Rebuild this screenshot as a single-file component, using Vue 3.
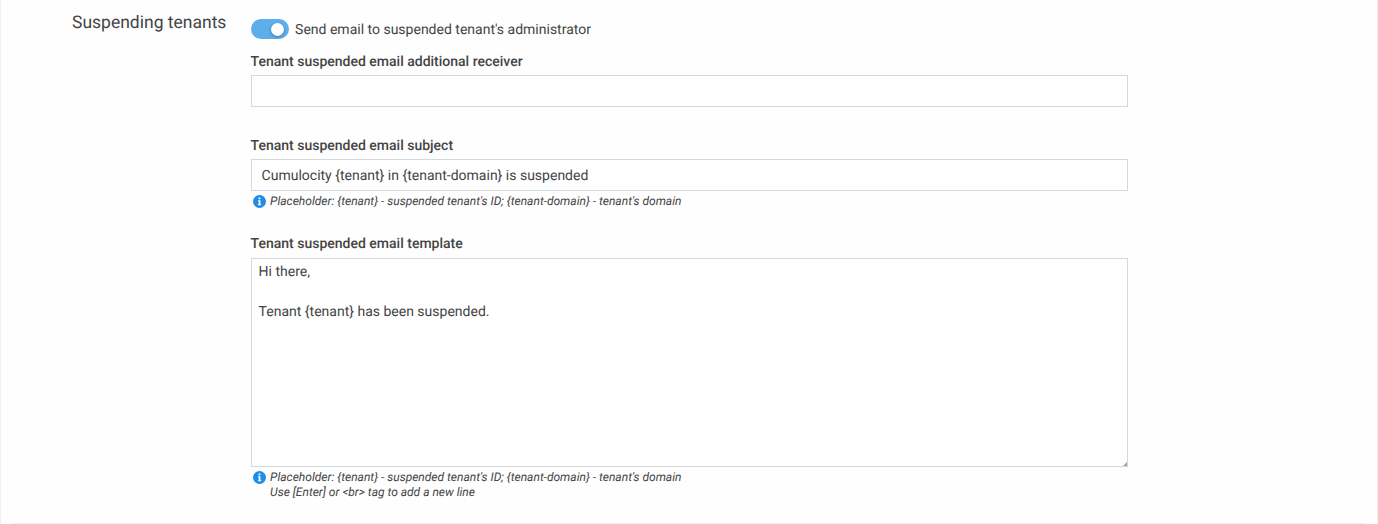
<script setup>
import { ref } from 'vue'

const notify = ref(true)
const receiver = ref('')
const subject = ref('Cumulocity {tenant} in {tenant-domain} is suspended')
const template = ref('Hi there,\n\nTenant {tenant} has been suspended.')
const placeholderHint = "Placeholder: {tenant} - suspended tenant's ID; {tenant-domain} - tenant's domain"
</script>

<template>
  <main class="panel">
    <section class="settings">
      <h2 class="title"><span>Suspending tenants</span></h2>
      <form class="fields" @submit.prevent>
        <label class="switch">
          <input v-model="notify" type="checkbox" class="switch-input" />
          <span class="track"><span class="thumb"></span></span>
          <span class="switch-text">Send email to suspended tenant's administrator</span>
        </label>

        <label class="label first" for="receiver"><span>Tenant suspended email additional receiver</span></label>
        <input id="receiver" v-model="receiver" class="control" type="text" />

        <label class="label second" for="subject"><span>Tenant suspended email subject</span></label>
        <input id="subject" v-model="subject" class="control subject" type="text" />
        <div class="hint">
          <svg class="info" viewBox="0 0 13 13" aria-hidden="true">
            <circle cx="6.5" cy="6.5" r="6.5" />
            <path d="M5.6 2.5h1.8v1.7H5.6zM5 5.2h2.4v4h.8v1H4.9v-1h.8v-3H5z" />
          </svg>
          <p><span>{{ placeholderHint }}</span></p>
        </div>

        <label class="label third" for="template"><span>Tenant suspended email template</span></label>
        <div class="area-wrap">
          <textarea id="template" v-model="template" class="control area"></textarea>
          <svg class="grip" viewBox="0 0 5 5" aria-hidden="true"><path d="M0 5 5 0V5z" /></svg>
        </div>
        <div class="hint">
          <svg class="info" viewBox="0 0 13 13" aria-hidden="true">
            <circle cx="6.5" cy="6.5" r="6.5" />
            <path d="M5.6 2.5h1.8v1.7H5.6zM5 5.2h2.4v4h.8v1H4.9v-1h.8v-3H5z" />
          </svg>
          <p><span>{{ placeholderHint }}</span><br /><span>Use [Enter] or &lt;br&gt; tag to add a new line</span></p>
        </div>
      </form>
    </section>
  </main>
</template>

<style>
body { background: #fefefe; }
</style>

<style scoped>
* { box-sizing: border-box; }
.panel {
  height: 524px;
  padding: 0 11px;
  border-left: 1px solid #f0f0f0;
  border-right: 1px solid #f0f0f0;
  background: #fefefe;
  color: #444;
  font: 14px/20px Roboto, sans-serif;
  text-rendering: geometricPrecision;
  overflow: hidden;
}
.settings {
  display: flex;
  height: 524px;
  padding-left: 60px;
  border-bottom: 1px solid #f0f0f0;
}
.title {
  width: 178.6px;
  margin: 11px 0 0;
  font-size: 17.5px;
  line-height: 24px;
  font-weight: 400;
  white-space: nowrap;
}
.fields { width: 877px; }
.switch { display: flex; align-items: center; height: 20px; margin-top: 19px; }
.switch-input { position: absolute; opacity: 0; width: 1px; height: 1px; margin: 0; }
.track {
  display: flex;
  align-items: center;
  width: 38px;
  height: 20px;
  padding: 0 4.5px;
  border-radius: 10px;
  background: #bbb;
}
.thumb {
  width: 13px;
  height: 13px;
  border-radius: 50%;
  background: #fff;
  box-shadow: 0 1px 3px rgba(0, 0, 0, 0.35);
}
.switch-input:checked + .track { background: #5eaeec; justify-content: flex-end; }
.switch-text { margin-left: 6.5px; padding-top: 1px; }
.label { display: block; height: 20px; padding-top: 1px; font-weight: 500; }
.first { margin: 12px 0 4px; }
.second { margin: 28px 0 4px; }
.third { margin: 23px 0 5px; }
.control {
  display: block;
  width: 100%;
  height: 32px;
  margin: 0;
  padding: 0 10px;
  border: 1px solid #d3d9db;
  border-radius: 0;
  outline: 0;
  background: #fff;
  color: #444;
  font: inherit;
  text-rendering: inherit;
}
.subject { padding-top: 1px; }
.area-wrap { position: relative; }
.area { height: 209px; padding: 3px 7px; resize: none; overflow: hidden; }
.grip {
  position: absolute;
  right: 1px;
  bottom: 1px;
  width: 4px;
  height: 4px;
  fill: #a5a5a8;
}
.hint { display: flex; padding: 3px 0 0 2px; font-size: 12px; line-height: 15.5px; font-style: italic; }
.hint p { margin: 0 0 0 4.5px; white-space: nowrap; }
.info { width: 13px; height: 13px; margin-top: 1px; }
.info circle { fill: #1f8ce6; }
.info path { fill: #fff; }
</style>
